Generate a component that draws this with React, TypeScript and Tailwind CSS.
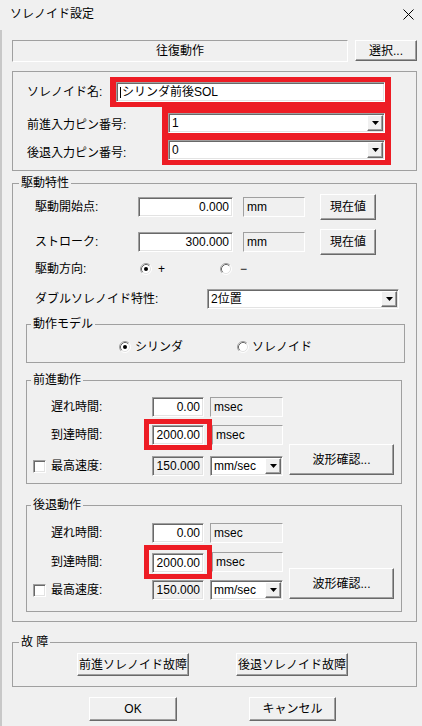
import type { ReactNode } from 'react';

// classic 3D edges
const sunken =
  'border border-t-[#a0a0a0] border-l-[#a0a0a0] border-r-white border-b-white shadow-[inset_1px_1px_0_#696969,inset_-1px_-1px_0_#e3e3e3]';
const raised =
  'border border-t-white border-l-white border-r-[#696969] border-b-[#696969] shadow-[inset_-1px_-1px_0_#a0a0a0] bg-[#f0f0f0] flex items-center justify-center';
const staticEdge = 'border border-t-[#a0a0a0] border-l-[#a0a0a0] border-r-white border-b-white';
const red = 'bg-[#ed1c24]';

const Button = ({ children, className = '' }: { children: ReactNode; className?: string }) => (
  <div className={`${raised} ${className}`}>{children}</div>
);

const DropButton = () => (
  <div className={`${raised} w-[16px] h-[16px] shrink-0`}>
    <svg width="7" height="4" viewBox="0 0 7 4">
      <polygon points="0,0 7,0 3.5,4" fill="#000" />
    </svg>
  </div>
);

const Combo = ({ value, className = '' }: { value: string; className?: string }) => (
  <div className={`${sunken} bg-white h-[20px] flex items-center pl-[3px] pr-[1px] ${className}`}>
    <span className="flex-1">{value}</span>
    <DropButton />
  </div>
);

const Field = ({ value, className = '', gray = false }: { value: string; className?: string; gray?: boolean }) => (
  <div
    className={`${sunken} ${gray ? 'bg-[#f0f0f0]' : 'bg-white'} h-[20px] flex items-center justify-end pr-[3px] ${className}`}
  >
    {value}
  </div>
);

const Unit = ({ text, className = '' }: { text: string; className?: string }) => (
  <div className={`${staticEdge} h-[20px] flex items-center pl-[3px] ${className}`}>{text}</div>
);

const Radio = ({ checked = false }: { checked?: boolean }) => (
  <svg width="12" height="12" viewBox="0 0 12 12" className="shrink-0">
    <circle cx="6" cy="6" r="5" fill="#fff" />
    <path d="M2.11 9.89 A5.5 5.5 0 0 1 9.89 2.11" fill="none" stroke="#a0a0a0" />
    <path d="M9.89 2.11 A5.5 5.5 0 0 1 2.11 9.89" fill="none" stroke="#fff" />
    <path d="M2.82 9.18 A4.5 4.5 0 0 1 9.18 2.82" fill="none" stroke="#696969" />
    <path d="M9.18 2.82 A4.5 4.5 0 0 1 2.82 9.18" fill="none" stroke="#e3e3e3" />
    {checked && <circle cx="6" cy="6" r="2" fill="#000" />}
  </svg>
);

const Check = () => <div className={`${sunken} bg-white w-[13px] h-[13px] shrink-0`} />;

const Group = ({
  title,
  className = '',
  legendClass = 'ml-[4px]',
  children,
}: {
  title: string;
  className?: string;
  legendClass?: string;
  children: ReactNode;
}) => (
  <fieldset className={`border border-[#a0a0a0] ${className}`}>
    <legend className={`${legendClass} px-[2px] leading-[14px]`}>{title}</legend>
    {children}
  </fieldset>
);

type MotionProps = {
  title: string;
  className: string;
  row1: string;
  row3: string;
  pb: string;
  redPad: string;
};

const MotionGroup = ({ title, className, row1, row3, pb, redPad }: MotionProps) => (
  <Group title={title} className={className}>
    <div className={`flex ${pb}`}>
      <div className="flex flex-col">
        <div className={`flex items-center pl-[24px] ${row1}`}>
          <span className="w-[101px]">遅れ時間:</span>
          <Field value="0.00" className="w-[52px]" />
          <Unit text="msec" className="ml-[6px] w-[73px]" />
        </div>
        <div className="flex items-center pl-[24px] mt-[2px]">
          <span className="w-[93px]">到達時間:</span>
          <div className={`${red} p-[5px]`}>
            <div className={`bg-[#f0f0f0] px-[3px] ${redPad}`}>
              <Field value="2000.00" className="w-[52px]" />
            </div>
          </div>
          <Unit text="msec" className="w-[71px]" />
        </div>
        <div className={`flex items-center pl-[6px] ${row3}`}>
          <Check />
          <span className="ml-[5px] w-[101px]">最高速度:</span>
          <Field value="150.000" gray className="w-[52px]" />
          <Combo value="mm/sec" className="ml-[6px] w-[73px]" />
        </div>
      </div>
      <Button className="self-end ml-[6px] mb-[1px] w-[105px] h-[31px]">波形確認...</Button>
    </div>
  </Group>
);

export default function App() {
  return (
    <div className="w-[422px] h-[726px] bg-[#f0f0f0] text-black text-[12px] flex flex-col overflow-hidden font-['Liberation_Sans','Noto_Sans_CJK_JP',sans-serif]">
      {/* title bar */}
      <div className="h-[30px] shrink-0 flex items-center justify-between pl-[10px] pr-[8px] pb-[2px]">
        <span className="text-[12px]">ソレノイド設定</span>
        <svg width="11" height="11" viewBox="0 0 11 11">
          <path d="M0.5 0.5 L10.5 10.5 M10.5 0.5 L0.5 10.5" stroke="#000" strokeWidth="1" />
        </svg>
      </div>

      <div className="flex-1 flex flex-col border-l-2 border-[#c8c8c8] pl-[10px] pr-[5px]">
        {/* mode row */}
        <div className="mt-[10px] flex items-start">
          <div className={`${staticEdge} w-[336px] h-[22px] flex items-center justify-center`}>往復動作</div>
          <Button className="ml-[7px] w-[62px] h-[21px]">選択...</Button>
        </div>

        {/* name / pins */}
        <div className="mt-[9px] border border-[#a0a0a0] pt-[5px] pb-[5px] pl-[14px] flex flex-col">
          <div className="flex items-center">
            <span className="w-[83px]">ソレノイド名:</span>
            <div className={`${red} w-[281px] px-[6px] py-[5px]`}>
              <div className={`${sunken} bg-white h-[20px] flex items-center pl-[3px]`}>
                <span className="w-[1px] h-[11px] bg-black mr-[1px]" />
                シリンダ前後SOL
              </div>
            </div>
          </div>
          <div className="flex items-center">
            <span className="w-[135px] mt-[6px]">前進入力ピン番号:</span>
            <div className={`${red} w-[229px] px-[6px] pt-[6px] pb-[4px]`}>
              <Combo value="1" />
            </div>
          </div>
          <div className="flex items-center">
            <span className="w-[135px] mt-[4px]">後退入力ピン番号:</span>
            <div className={`${red} w-[229px] px-[6px] pt-[3px] pb-[5px]`}>
              <Combo value="0" />
            </div>
          </div>
        </div>

        {/* drive characteristics */}
        <Group title="駆動特性" className="mt-[5px]" legendClass="ml-[6px]">
          <div className="flex flex-col pb-[9px]">
            <div className="mt-[4px] pl-[22px] flex items-center h-[26px]">
              <span className="w-[103px]">駆動開始点:</span>
              <Field value="0.000" className="w-[95px]" />
              <Unit text="mm" className="ml-[10px] w-[62px]" />
              <Button className="ml-[15px] w-[56px] h-[26px]">現在値</Button>
            </div>
            <div className="mt-[9px] pl-[22px] flex items-center h-[26px]">
              <span className="w-[103px]">ストローク:</span>
              <Field value="300.000" className="w-[95px]" />
              <Unit text="mm" className="ml-[10px] w-[62px]" />
              <Button className="ml-[15px] w-[56px] h-[26px]">現在値</Button>
            </div>
            <div className="mt-[7px] pl-[22px] flex items-center h-[14px]">
              <span className="w-[105px]">駆動方向:</span>
              <div className="w-[80px] flex items-center gap-[6px]">
                <Radio checked />
                <span>+</span>
              </div>
              <div className="flex items-center gap-[8px]">
                <Radio />
                <span>−</span>
              </div>
            </div>
            <div className="mt-[13px] pl-[22px] flex items-center">
              <span className="w-[172px]">ダブルソレノイド特性:</span>
              <Combo value="2位置" className="w-[192px]" />
            </div>

            <Group title="動作モデル" className="mt-[8px] ml-[13px] mr-[11px]">
              <div className="mt-[9px] pb-[8px] pl-[92px] flex items-center h-[14px] box-content">
                <div className="w-[118px] flex items-center gap-[4px]">
                  <Radio checked />
                  <span>シリンダ</span>
                </div>
                <div className="flex items-center gap-[3px]">
                  <Radio />
                  <span>ソレノイド</span>
                </div>
              </div>
            </Group>

            <MotionGroup
              title="前進動作"
              className="mt-[10px] ml-[13px] mr-[14px]"
              row1="mt-[10px]"
              row3="mt-[6px]"
              pb="pb-[7px]"
              redPad="pt-[1px]"
            />
            <MotionGroup
              title="後退動作"
              className="mt-[14px] ml-[13px] mr-[14px]"
              row1="mt-[11px]"
              row3="mt-[1px]"
              pb="pb-[11px]"
              redPad="pt-[3px] pb-[1px]"
            />
          </div>
        </Group>

        {/* failure */}
        <Group title="故 障" className="mt-[13px]" legendClass="ml-[6px]">
          <div className="mt-[4px] pb-[10px] pl-[64px] flex items-center">
            <Button className="w-[112px] h-[23px]">前進ソレノイド故障</Button>
            <Button className="ml-[47px] w-[112px] h-[23px]">後退ソレノイド故障</Button>
          </div>
        </Group>

        <div className="mt-[10px] pl-[77px] flex items-center">
          <Button className="w-[88px] h-[24px]">OK</Button>
          <Button className="ml-[72px] w-[87px] h-[24px]">キャンセル</Button>
        </div>
      </div>
    </div>
  );
}
